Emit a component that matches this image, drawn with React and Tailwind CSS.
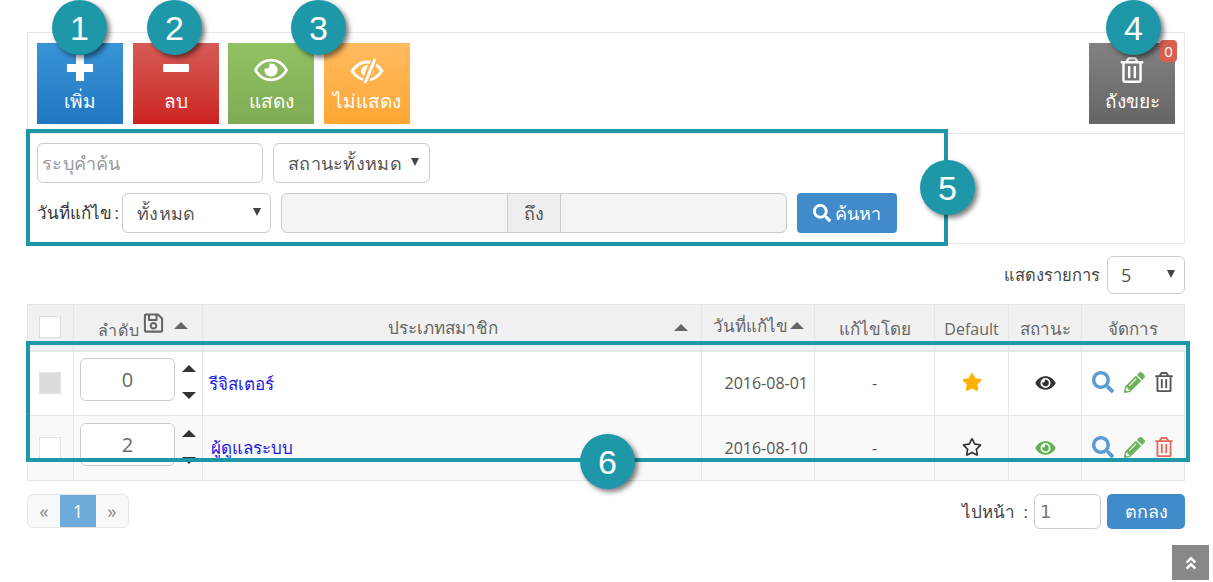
import React from 'react';
import { FaRegEye, FaEye, FaRegTrashAlt, FaSearch, FaPencilAlt, FaStar, FaRegStar, FaRegSave, FaAngleDoubleUp } from 'react-icons/fa';

const font = { fontFamily: '"Open Sans", "Noto Sans", "Liberation Sans", sans-serif' };

function Callout({ n, pos }) {
    return (
        <div className={`absolute w-[55px] h-[55px] rounded-full bg-[#1e98a8] text-white font-['Liberation_Sans'] text-[34px] leading-none flex items-center justify-center shadow-[3px_3px_5px_rgba(0,0,0,0.5)] ${pos}`}>
            {n}
        </div>
    );
}

function ToolButton({ label, bg, children, cls = '' }) {
    return (
        <div className={`relative w-[86px] h-[81px] flex flex-col items-center text-white text-[19px] ${bg} ${cls}`}>
            <div className="h-[46px] flex items-end justify-center">{children}</div>
            <div className="leading-[24px] whitespace-nowrap">{label}</div>
        </div>
    );
}

function Select({ label, cls }) {
    return (
        <div className={`flex items-center justify-between border border-[#ccc] rounded-[6px] bg-white text-[#555] text-[18px] tracking-[0.3px] ${cls}`}>
            <span className="whitespace-nowrap">{label}</span>
            <span className="w-0 h-0 border-x-[4px] border-x-transparent border-t-[8px] border-t-[#444] mb-[2px]" />
        </div>
    );
}

function Tri({ down, cls = '' }) {
    return down
        ? <span className={`inline-block w-0 h-0 border-x-[7px] border-x-transparent border-t-[7px] border-t-[#333] ${cls}`} />
        : <span className={`inline-block w-0 h-0 border-x-[7px] border-x-transparent border-b-[7px] ${cls || 'border-b-[#333]'}`} />;
}

function Row({ value, name, nameCls, date, checkCls, rowCls, defaultIcon, eye, trash }) {
    const td = 'border border-[#e6e6e6] p-0';
    return (
        <tr className={`h-[65px] ${rowCls}`}>
            <td className={td}>
                <div className={`w-[22px] h-[22px] ml-[11px] border border-[#e3e3e3] ${checkCls}`} />
            </td>
            <td className={td}>
                <div className="flex items-center pl-[6px]">
                    <input readOnly value={value} className="w-[95px] h-[43px] mb-[8px] border border-[#ccc] rounded-[6px] bg-white text-center text-[20px] text-[#666] outline-none" />
                    <div className="flex flex-col items-center gap-[20px] ml-[7px] mb-[3px]">
                        <Tri />
                        <Tri down />
                    </div>
                </div>
            </td>
            <td className={td}><span className={`text-[17px] text-[#1a1ae8] ${nameCls}`}>{name}</span></td>
            <td className={`${td} text-right pr-[6px] text-[16px] text-[#555]`}>{date}</td>
            <td className={`${td} text-center text-[16px] text-[#555]`}>-</td>
            <td className={td}><div className="flex justify-center mb-[2px]">{defaultIcon}</div></td>
            <td className={td}><div className="flex justify-center mb-[1px]">{eye}</div></td>
            <td className={td}>
                <div className="flex items-center pl-[10px] gap-[10px] mb-[2px]">
                    <FaSearch className="w-[22px] h-[22px] text-[#5b9bd1]" />
                    <FaPencilAlt className="w-[21px] h-[21px] text-[#6cb25a]" />
                    <FaRegTrashAlt className={`w-[18px] h-[20px] ${trash}`} />
                </div>
            </td>
        </tr>
    );
}

export default function App() {
    const th = 'border border-[#e6e6e6] p-0 font-normal text-[#666] text-[17px]';
    return (
        <div className="relative w-[1213px] h-[582px] overflow-hidden bg-white pl-[27px] pr-[28px] pt-[32px]" style={font}>
            {/* Toolbar */}
            <div className="flex h-[102px] border border-[#e5e8ee] pl-[9px] pr-[9px] pt-[10px]">
                <ToolButton label="เพิ่ม" bg="bg-gradient-to-b from-[#3a94d8] to-[#1f78c0]" cls="mr-[10px]">
                    <svg width="26" height="26" viewBox="0 0 26 26" className="mb-[8px]"><path d="M9 0h8v9h9v8h-9v9H9v-9H0V9h9z" fill="#fff" /></svg>
                </ToolButton>
                <ToolButton label="ลบ" bg="bg-gradient-to-b from-[#d65a56] to-[#cc2020]" cls="mr-[9px]">
                    <svg width="26" height="8" viewBox="0 0 26 8" className="mb-[17px]"><rect width="26" height="8" rx="1" fill="#fff" /></svg>
                </ToolButton>
                <ToolButton label="แสดง" bg="bg-gradient-to-b from-[#90c263] to-[#80ab53]" cls="mr-[10px]">
                    <FaRegEye className="w-[34px] h-[30px] mb-[4px]" />
                </ToolButton>
                <ToolButton label="ไม่แสดง" bg="bg-gradient-to-b from-[#ffbb5f] to-[#ffa632]">
                    <svg width="34" height="26" viewBox="0 0 34 26" className="mb-[5px]">
                        <path d="M2 13C7 6 12 4 17 4s10 2 15 9c-5 7-10 9-15 9S7 20 2 13Z" fill="none" stroke="#fff" strokeWidth="3" />
                        <path d="M18 7a7 7 0 0 0-7 6c0 2 1 4 3 5Z" fill="#fff" />
                        <path d="M24 11a7 7 0 0 1-4 7l2-7Z" fill="#fff" />
                        <path d="M15 25 25 1" stroke="#ffae45" strokeWidth="6" />
                        <path d="M15 25 25 1" stroke="#fff" strokeWidth="3" />
                    </svg>
                </ToolButton>
                <ToolButton label="ถังขยะ" bg="bg-gradient-to-b from-[#828282] to-[#656565]" cls="ml-auto">
                    <FaRegTrashAlt className="w-[24px] h-[26px] mb-[6px]" />
                    <span className="absolute -top-[3px] -right-[2px] w-[17px] h-[22px] rounded-[4px] bg-[#d9604f] text-[15px] leading-[22px] text-center">0</span>
                </ToolButton>
            </div>

            {/* Search */}
            <div className="h-[110px] border-x border-b border-[#e8e8e8] pl-[9px] pt-[9px]">
                <div className="flex gap-[10px]">
                    <input placeholder="ระบุคำค้น" className="w-[226px] h-[40px] border border-[#ccc] rounded-[6px] px-[4px] text-[18px] tracking-[0.3px] text-[#555] placeholder:text-[#999] outline-none" />
                    <Select label="สถานะทั้งหมด" cls="w-[157px] h-[40px] pl-[14px] pr-[10px]" />
                </div>
                <div className="flex items-center mt-[10px]">
                    <span className="w-[85px] text-[17px] [word-spacing:-2px] text-[#333] whitespace-nowrap">วันที่แก้ไข :</span>
                    <Select label="ทั้งหมด" cls="w-[149px] h-[40px] pl-[14px] pr-[9px]" />
                    <div className="flex w-[506px] h-[40px] ml-[10px] border border-[#ccc] rounded-[6px] bg-[#f4f4f4]">
                        <div className="w-[225px]" />
                        <div className="w-[54px] border-x border-[#ccc] bg-[#eee] text-[#555] text-[18px] flex items-center justify-center">ถึง</div>
                    </div>
                    <div className="flex items-center justify-center gap-[4px] w-[100px] h-[40px] ml-[10px] rounded-[4px] bg-[#428bca] text-white text-[18px] tracking-[0.2px]">
                        <FaSearch className="w-[18px] h-[18px]" />
                        <span>ค้นหา</span>
                    </div>
                </div>
            </div>

            {/* Per page */}
            <div className="flex items-center justify-end h-[38px] mt-[12px] gap-[7px]">
                <span className="text-[16.5px] text-[#444]">แสดงรายการ</span>
                <Select label="5" cls="w-[78px] h-[38px] pl-[13px] pr-[9px]" />
            </div>

            {/* Table */}
            <table className="table-fixed border-collapse w-[1157px] mt-[10px]">
                <colgroup>
                    <col className="w-[46px]" />
                    <col className="w-[129px]" />
                    <col className="w-[499px]" />
                    <col className="w-[113px]" />
                    <col className="w-[120px]" />
                    <col className="w-[74px]" />
                    <col className="w-[73px]" />
                    <col className="w-[103px]" />
                </colgroup>
                <thead>
                    <tr className="h-[46px] bg-[#f1f1f1] border-b-[2px] border-[#e6e6e6]">
                        <th className={th}><div className="w-[22px] h-[22px] ml-[11px] border border-[#ddd] bg-white" /></th>
                        <th className={th}>
                            <div className="flex items-center pl-[24px] gap-[4px]">
                                <span className="pt-[6px] text-[16px] tracking-[0.8px]">ลำดับ</span>
                                <FaRegSave className="w-[21px] h-[22px] mb-[8px]" />
                                <Tri cls="border-b-[#666] ml-[6px] mb-[4px]" />
                            </div>
                        </th>
                        <th className={th}>
                            <div className="flex items-center pl-[185px] pr-[13px] justify-between">
                                <span>ประเภทสมาชิก</span>
                                <Tri cls="border-b-[#666]" />
                            </div>
                        </th>
                        <th className={th}>
                            <div className="flex items-center justify-center gap-[2px] mb-[4px] whitespace-nowrap">
                                <span>วันที่แก้ไข</span>
                                <Tri cls="border-b-[#666]" />
                            </div>
                        </th>
                        <th className={th}><div className="pt-[3px]">แก้ไขโดย</div></th>
                        <th className={th}><div className="pt-[3px] text-[16px]">Default</div></th>
                        <th className={th}><div className="pt-[3px]">สถานะ</div></th>
                        <th className={th}><div className="pt-[3px]">จัดการ</div></th>
                    </tr>
                </thead>
                <tbody>
                    <Row value="0" name="รีจิสเตอร์" nameCls="ml-[6px]" date="2016-08-01" checkCls="bg-[#dcdcdc]" rowCls="bg-white"
                        defaultIcon={<FaStar className="w-[20px] h-[20px] text-[#ffb300]" />}
                        eye={<FaEye className="w-[21px] h-[18px] text-[#333]" />}
                        trash="text-[#555]" />
                    <Row value="2" name="ผู้ดูแลระบบ" nameCls="ml-[8px]" date="2016-08-10" checkCls="bg-white" rowCls="bg-[#f9f9f9]"
                        defaultIcon={<FaRegStar className="w-[20px] h-[20px] text-[#333]" />}
                        eye={<FaEye className="w-[21px] h-[18px] text-[#62b04f]" />}
                        trash="text-[#e8685f]" />
                </tbody>
            </table>

            {/* Pagination */}
            <div className="flex items-start justify-between mt-[13px]">
                <div className="flex h-[34px] border border-[#e6e6e6] rounded-[6px] overflow-hidden text-[18px] bg-[#f9f9f9] text-[#888]">
                    <span className="w-[32px] flex items-center justify-center">«</span>
                    <span className="w-[36px] flex items-center justify-center bg-[#6dabd9] text-white text-[18px]">1</span>
                    <span className="w-[32px] flex items-center justify-center">»</span>
                </div>
                <div className="flex items-center h-[35px]">
                    <span className="text-[17px] text-[#444] mr-[6px] whitespace-nowrap">ไปหน้า &nbsp;:</span>
                    <input readOnly value="1" className="w-[67px] h-[35px] border border-[#ccc] rounded-[6px] px-[5px] font-['DejaVu_Sans'] text-[18px] text-[#777] outline-none" />
                    <div className="w-[78px] h-[35px] ml-[6px] rounded-[5px] bg-[#428bca] text-white text-[18px] flex items-center justify-center">ตกลง</div>
                </div>
            </div>

            {/* Scroll to top */}
            <div className="absolute left-[1172px] top-[545px] w-[37px] h-[35px] bg-[#888] flex items-center justify-center">
                <FaAngleDoubleUp className="w-[16px] h-[16px] text-white" />
            </div>

            {/* Annotation frames */}
            <div className="absolute left-[26px] top-[129px] w-[922px] h-[117px] border-[4px] border-[#1e98a8]" />
            <div className="absolute left-[26px] top-[341px] w-[1164px] h-[121px] border-[4px] border-[#1e98a8]" />

            <Callout n="1" pos="left-[52px] top-0" />
            <Callout n="2" pos="left-[147px] top-0" />
            <Callout n="3" pos="left-[291px] top-0" />
            <Callout n="4" pos="left-[1106px] top-0" />
            <Callout n="5" pos="left-[920px] top-[160px]" />
            <Callout n="6" pos="left-[580px] top-[434px]" />
        </div>
    );
}
